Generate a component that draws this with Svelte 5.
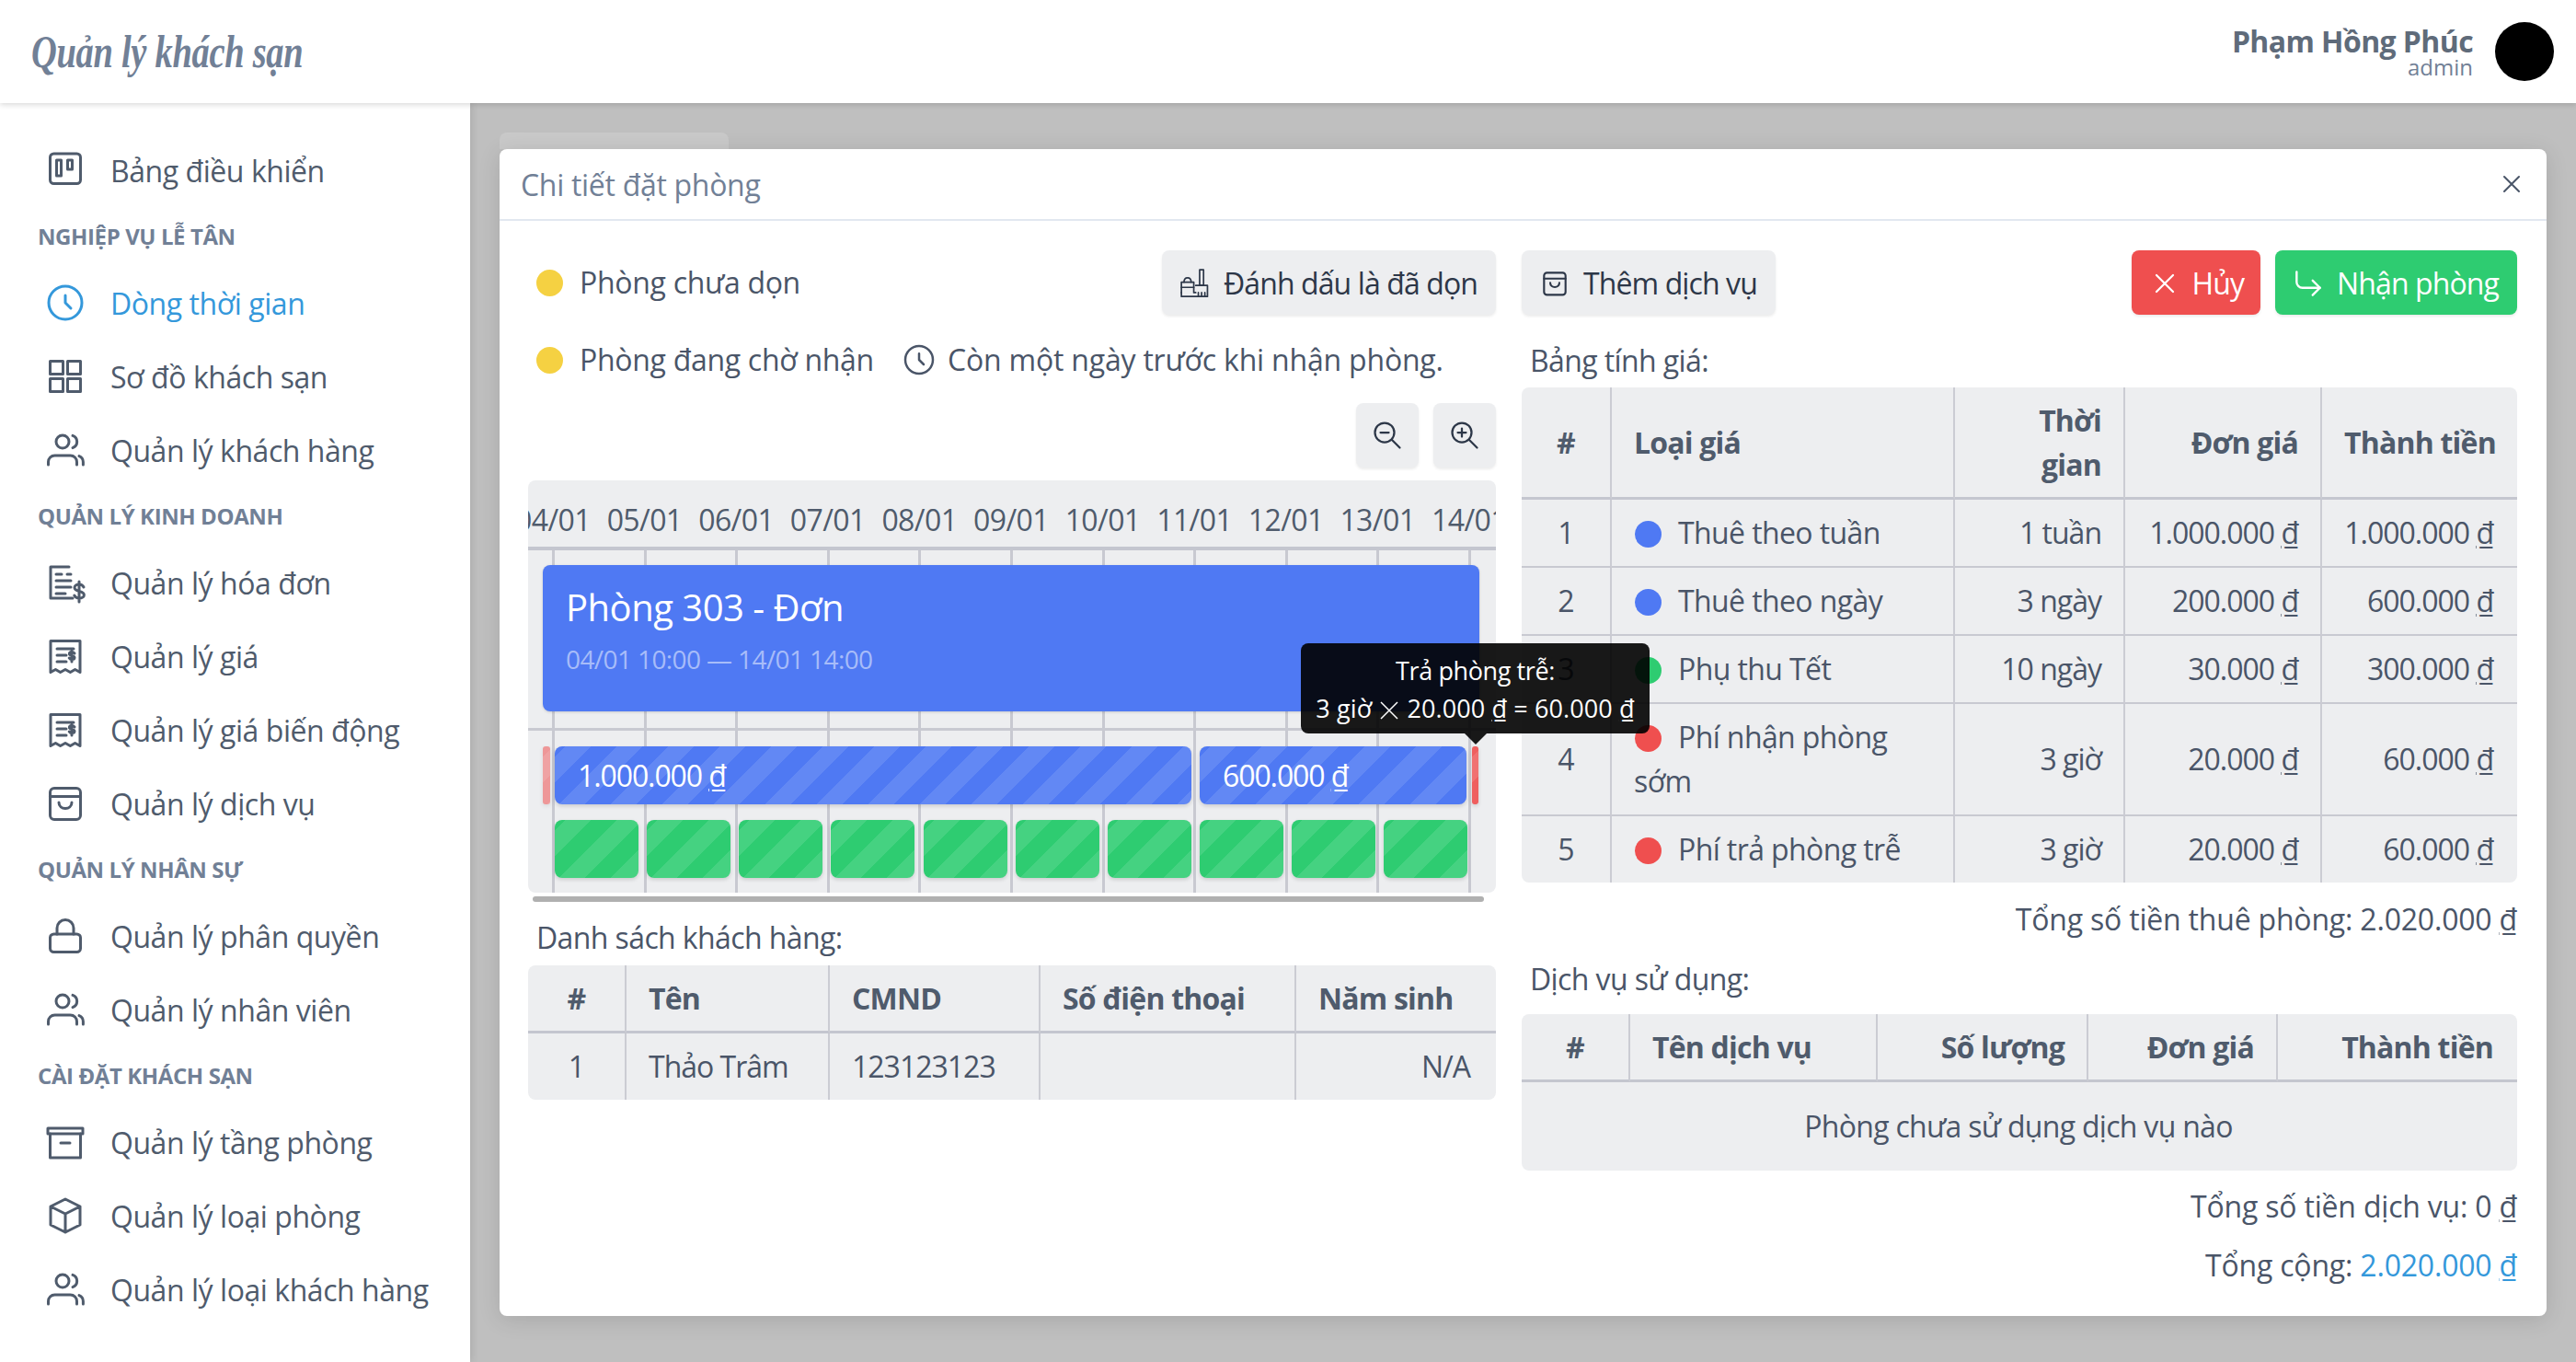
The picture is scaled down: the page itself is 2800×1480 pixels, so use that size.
<script>
  const icons = {
    project: ['M5.75 3h12.5a2 2 0 012 2v12.25a2 2 0 01-2 2H5.75a2 2 0 01-2-2V5a2 2 0 012-2z', 'M7.25 6.5h2.5v8.5h-2.5z', 'M13.25 6.5h2.5v5h-2.5z'],
    clock: ['M12 8v4l3 3m6-3a9 9 0 11-18 0 9 9 0 0118 0z'],
    grid: ['M3.75 3.75h7v7h-7z', 'M13.25 3.75h7v7h-7z', 'M3.75 13.25h7v7h-7z', 'M13.25 13.25h7v7h-7z'],
    users: ['M7 7.5a3.5 3.5 0 107 0 3.5 3.5 0 00-7 0z', 'M2.75 20v-1.5a3.5 3.5 0 013.5-3.5h8.5a3.5 3.5 0 013.5 3.5V20', 'M16 4.2a3.5 3.5 0 010 6.6', 'M19.5 15.3a3.5 3.5 0 012.2 3.2V20'],
    invoice: ['M14 3.5H4v17h12', 'M7 7.5h3M7 11h8M7 14.5h8M7 18h5', 'M13 7.5h2', 'M22 14.5c-.5-1-1.5-1.5-2.5-1.5-1.4 0-2.5.7-2.5 1.8 0 2.5 5.2 1.4 5.2 3.9 0 1.1-1.2 1.8-2.7 1.8-1.1 0-2.1-.5-2.6-1.5M19.5 11.5v11'],
    receipt: ['M4 3.75h16v17l-2.7-1.5-2.6 1.5-2.7-1.5-2.7 1.5-2.6-1.5L4 20.75z', 'M7.5 8h9M7.5 11.5h5M7.5 15h5', 'M17 10.5c-.4-.5-1-.7-1.5-.7-.8 0-1.3.4-1.3 1 0 1.3 2.8.7 2.8 2 0 .6-.6 1-1.4 1-.6 0-1.2-.3-1.5-.8M15.5 9v6'],
    bag: ['M6 3.75h12a2.25 2.25 0 012.25 2.25v12.5A2.25 2.25 0 0118 20.75H6a2.25 2.25 0 01-2.25-2.25V6A2.25 2.25 0 016 3.75z', 'M3.75 8.25h16.5', 'M8.5 11.5c0 4.4 7 4.4 7 0'],
    lock: ['M5.75 11h12.5a2 2 0 012 2v5.75a2 2 0 01-2 2H5.75a2 2 0 01-2-2V13a2 2 0 012-2z', 'M7.5 11V7.75a4.5 4.5 0 019 0V11'],
    archive: ['M2.5 4.5h19v3h-19z', 'M3.75 7.5v13h16.5v-13', 'M9.5 12.5h5'],
    cube: ['M20 7l-8-4-8 4m16 0l-8 4m8-4v10l-8 4m0-10L4 7m8 4v10M4 7v10l8 4'],
    close: ['M6 6l12 12M18 6L6 18'],
    zoomOut: ['M21 21l-6-6m2-5a7 7 0 11-14 0 7 7 0 0114 0z', 'M13 10H7'],
    zoomIn: ['M21 21l-6-6m2-5a7 7 0 11-14 0 7 7 0 0114 0z', 'M10 7v6m3-3H7'],
    enter: ['M15 10l5 5-5 5', 'M4 4v7a4 4 0 004 4h12'],
    broom: ['M15.5 1.5h3v12h-3z', 'M12.5 13.5h9v8.5H1.5v-3', 'M17 22v-3M14.5 22v-3M19.5 22v-3', 'M1.5 19V11h9.5v8H12.5', 'M1.5 15h9.5', 'M3.5 11c0-4.5 5.5-4.5 5.5 0']
  };

  const menu = [
    { icon: 'project', label: 'Bảng điều khiển' },
    { group: 'Nghiệp vụ lễ tân' },
    { icon: 'clock', label: 'Dòng thời gian', active: true },
    { icon: 'grid', label: 'Sơ đồ khách sạn' },
    { icon: 'users', label: 'Quản lý khách hàng' },
    { group: 'Quản lý kinh doanh' },
    { icon: 'invoice', label: 'Quản lý hóa đơn' },
    { icon: 'receipt', label: 'Quản lý giá' },
    { icon: 'receipt', label: 'Quản lý giá biến động' },
    { icon: 'bag', label: 'Quản lý dịch vụ' },
    { group: 'Quản lý nhân sự' },
    { icon: 'lock', label: 'Quản lý phân quyền' },
    { icon: 'users', label: 'Quản lý nhân viên' },
    { group: 'Cài đặt khách sạn' },
    { icon: 'archive', label: 'Quản lý tầng phòng' },
    { icon: 'cube', label: 'Quản lý loại phòng' },
    { icon: 'users', label: 'Quản lý loại khách hàng' }
  ];

  const step = 99.6;
  const cellStep = 100.15;
  const days = ['04/01', '05/01', '06/01', '07/01', '08/01', '09/01', '10/01', '11/01', '12/01', '13/01', '14/01'];

  const prices = [
    { n: 1, color: 'blue', name: 'Thuê theo tuần', time: '1 tuần', unit: '1.000.000', total: '1.000.000' },
    { n: 2, color: 'blue', name: 'Thuê theo ngày', time: '3 ngày', unit: '200.000', total: '600.000' },
    { n: 3, color: 'green', name: 'Phụ thu Tết', time: '10 ngày', unit: '30.000', total: '300.000' },
    { n: 4, color: 'red', name: 'Phí nhận phòng sớm', time: '3 giờ', unit: '20.000', total: '60.000' },
    { n: 5, color: 'red', name: 'Phí trả phòng trễ', time: '3 giờ', unit: '20.000', total: '60.000' }
  ];
</script>

{#snippet icon(name, size = 48, width = 1.5)}
  <svg class="icon" viewBox="0 0 24 24" width={size} height={size} fill="none" stroke="currentColor" stroke-width={width} stroke-linecap="round" stroke-linejoin="round">
    {#each icons[name] as d}<path {d} />{/each}
  </svg>
{/snippet}

{#snippet money(value)}{value} <u>₫</u>{/snippet}

<div class="page">
  <header class="topbar">
    <div class="logo">Quản lý khách sạn</div>
    <div class="user">
      <div class="who">
        <div class="name">Phạm Hồng Phúc</div>
        <div class="role">admin</div>
      </div>
      <div class="avatar"></div>
    </div>
  </header>

  <div class="shell">
    <nav class="sidebar">
      {#each menu as item}
        {#if item.group}
          <div class="group">{item.group}</div>
        {:else}
          <div class="item" class:active={item.active}>
            {@render icon(item.icon)}
            <span>{item.label}</span>
          </div>
        {/if}
      {/each}
    </nav>

    <main class="main">
      <div class="tab"></div>
      <section class="modal">
        <div class="modal-head">
          <span class="title">Chi tiết đặt phòng</span>
          <span class="close">{@render icon('close', 32, 1.5)}</span>
        </div>

        <div class="modal-body">
          <div class="col left">
            <div class="status-row">
              <div class="status"><i class="dot yellow"></i>Phòng chưa dọn</div>
              <button class="btn">{@render icon('broom', 34, 1.2)}Đánh dấu là đã dọn</button>
            </div>
            <div class="status second">
              <i class="dot yellow"></i>Phòng đang chờ nhận
              <span class="hint">{@render icon('clock', 40, 1.5)}Còn một ngày trước khi nhận phòng.</span>
            </div>
            <div class="zoom-row">
              <button class="btn square">{@render icon('zoomOut', 36, 1.5)}</button>
              <button class="btn square">{@render icon('zoomIn', 36, 1.5)}</button>
            </div>

            <div class="timeline-wrap">
              <div class="timeline">
                <div class="dates">
                  {#each days as d, i}
                    <span class="date" style="left: {27 + step * i}px">{d}</span>
                  {/each}
                </div>
                {#each days as d, i}
                  <i class="vline" style="left: {26 + step * i}px"></i>
                {/each}
                <i class="hline"></i>

                <div class="event">
                  <div class="event-title">Phòng 303 - Đơn</div>
                  <div class="event-sub">04/01 10:00 — 14/01 14:00</div>
                </div>

                <div class="bar fee faded" style="left: 16px; width: 8px"></div>
                <div class="bar blue-bar" style="left: 29px; width: 692px">{@render money('1.000.000')}</div>
                <div class="bar blue-bar" style="left: 730px; width: 290px">{@render money('600.000')}</div>
                <div class="bar fee" style="left: 1026px; width: 7px"></div>

                {#each days.slice(0, 10) as d, i}
                  <div class="cell" style="left: {29 + cellStep * i}px"></div>
                {/each}
              </div>

              <div class="tooltip">
                <div>Trả phòng trễ:</div>
                <div class="calc">3 giờ <svg viewBox="0 0 20 20" width="20" height="20" fill="none" stroke="currentColor" stroke-width="1.5"><path d="M1 1l18 18M19 1L1 19" /></svg> 20.000 <u>₫</u> = 60.000 <u>₫</u></div>
              </div>
            </div>
            <div class="scrollbar"></div>

            <div class="label">Danh sách khách hàng:</div>
            <table class="grid guests">
              <colgroup><col style="width: 107px" /><col style="width: 221px" /><col style="width: 229px" /><col style="width: 278px" /><col /></colgroup>
              <thead>
                <tr><th class="c">#</th><th>Tên</th><th>CMND</th><th>Số điện thoại</th><th>Năm sinh</th></tr>
              </thead>
              <tbody>
                <tr><td class="c">1</td><td>Thảo Trâm</td><td>123123123</td><td></td><td class="r">N/A</td></tr>
              </tbody>
            </table>
          </div>

          <div class="col right">
            <div class="actions">
              <button class="btn">{@render icon('bag', 34, 1.5)}Thêm dịch vụ</button>
              <div class="spacer"></div>
              <button class="btn danger">{@render icon('close', 36, 1.5)}Hủy</button>
              <button class="btn success">{@render icon('enter', 38, 1.5)}Nhận phòng</button>
            </div>

            <div class="label">Bảng tính giá:</div>
            <table class="grid">
              <colgroup><col style="width: 98px" /><col style="width: 373px" /><col style="width: 185px" /><col style="width: 214px" /><col /></colgroup>
              <thead>
                <tr><th class="c">#</th><th>Loại giá</th><th class="r wrap">Thời gian</th><th class="r">Đơn giá</th><th class="r">Thành tiền</th></tr>
              </thead>
              <tbody>
                {#each prices as p}
                  <tr>
                    <td class="c">{p.n}</td>
                    <td><i class="dot {p.color}"></i>{p.name}</td>
                    <td class="r">{p.time}</td>
                    <td class="r">{@render money(p.unit)}</td>
                    <td class="r">{@render money(p.total)}</td>
                  </tr>
                {/each}
              </tbody>
            </table>

            <div class="total">Tổng số tiền thuê phòng: {@render money('2.020.000')}</div>

            <div class="label used">Dịch vụ sử dụng:</div>
            <table class="grid">
              <colgroup><col style="width: 118px" /><col style="width: 269px" /><col style="width: 229px" /><col style="width: 206px" /><col /></colgroup>
              <thead>
                <tr><th class="c">#</th><th>Tên dịch vụ</th><th class="r">Số lượng</th><th class="r">Đơn giá</th><th class="r">Thành tiền</th></tr>
              </thead>
              <tbody>
                <tr><td class="empty" colspan="5">Phòng chưa sử dụng dịch vụ nào</td></tr>
              </tbody>
            </table>

            <div class="total service">Tổng số tiền dịch vụ: {@render money('0')}</div>
            <div class="total sum">Tổng cộng: <span class="link">{@render money('2.020.000')}</span></div>
          </div>
        </div>
      </section>
    </main>
  </div>
</div>

<style>
  :global(body) {
    margin: 0;
  }

  .page {
    width: 2800px;
    height: 1480px;
    overflow: hidden;
    font-family: "Open Sans", "Noto Sans", sans-serif;
    font-size: 32px;
    line-height: 48px;
    letter-spacing: -0.6px;
    color: #4a5568;
    background: #fff;
  }

  .topbar {
    position: relative;
    z-index: 3;
    height: 112px;
    padding: 0 24px 0 34px;
    box-sizing: border-box;
    display: flex;
    align-items: center;
    justify-content: space-between;
    background: #fff;
    box-shadow: 0 2px 6px rgba(0, 0, 0, 0.15);
  }

  .logo {
    font-family: "Liberation Serif", serif;
    font-style: italic;
    font-weight: 700;
    font-size: 50px;
    letter-spacing: -0.4px;
    color: #718096;
    transform: scaleX(0.77);
    transform-origin: left center;
  }

  .user {
    display: flex;
    align-items: center;
    gap: 24px;
  }

  .who {
    text-align: right;
  }

  .name {
    padding-top: 2px;
    font-weight: 700;
    line-height: 32px;
    color: #5f6b7a;
  }

  .role {
    font-size: 24px;
    line-height: 24px;
    letter-spacing: 0;
    color: #718096;
  }

  .avatar {
    width: 64px;
    height: 64px;
    border-radius: 50%;
    background: #000;
  }

  .shell {
    display: flex;
    height: 1368px;
  }

  .sidebar {
    position: relative;
    z-index: 2;
    width: 511px;
    flex: none;
    padding-top: 33px;
    box-sizing: border-box;
    background: #fff;
    box-shadow: 2px 0 8px rgba(0, 0, 0, 0.1);
  }

  .item {
    height: 80px;
    padding-left: 47px;
    display: flex;
    align-items: center;
    gap: 25px;
    letter-spacing: -0.45px;
    color: #4f5b6c;
  }

  .item span {
    padding-top: 2px;
  }

  .item.active {
    color: #3498db;
  }

  .group {
    height: 64px;
    padding-left: 41px;
    line-height: 64px;
    font-size: 24px;
    font-weight: 700;
    text-transform: uppercase;
    letter-spacing: -0.4px;
    color: #718096;
  }

  .icon {
    flex: none;
  }

  .main {
    flex: 1;
    padding: 32px 32px 0;
    background: #bfbfbf;
  }

  .tab {
    width: 249px;
    height: 18px;
    border-radius: 8px 8px 0 0;
    background: #c9c9c9;
  }

  .modal {
    height: 1268px;
    border-radius: 8px;
    background: #fff;
    box-shadow: 0 4px 24px rgba(0, 0, 0, 0.12);
  }

  .modal-head {
    height: 76px;
    padding: 0 22px 0 23px;
    display: flex;
    align-items: center;
    justify-content: space-between;
    border-bottom: 2px solid #e2e8f0;
    color: #718096;
  }

  .title {
    padding-top: 2px;
    letter-spacing: -0.3px;
  }

  .close {
    display: flex;
    color: #4a5568;
  }

  .modal-body {
    display: flex;
    gap: 28px;
    padding: 32px 32px 0 31px;
  }

  .left {
    width: 1052px;
    flex: none;
  }

  .right {
    flex: 1;
    min-width: 0;
  }

  .status-row {
    height: 70px;
    display: flex;
    align-items: center;
    justify-content: space-between;
  }

  .status {
    display: flex;
    align-items: center;
    padding-left: 9px;
    letter-spacing: -0.3px;
  }

  .second {
    height: 48px;
    margin-top: 25px;
  }

  .hint {
    display: flex;
    align-items: center;
    gap: 11px;
    margin-left: 29px;
    letter-spacing: -0.2px;
  }

  .dot {
    display: inline-block;
    width: 29px;
    height: 29px;
    margin-right: 18px;
    border-radius: 50%;
    vertical-align: -4px;
  }

  .grid td .dot {
    margin-left: 1px;
  }

  .yellow { background: #f5d142; }
  .blue { background: #4f79f3; }
  .green { background: #2ecc71; }
  .red { background: #ef4f4f; }

  .btn {
    height: 70px;
    padding: 2px 20px 0 19px;
    display: inline-flex;
    align-items: center;
    gap: 14px;
    border: 0;
    border-radius: 8px;
    font: inherit;
    letter-spacing: -0.9px;
    color: #2d3748;
    background: #edeef0;
    box-shadow: 0 2px 3px rgba(0, 0, 0, 0.08);
  }

  .square {
    width: 68px;
    padding: 0;
    justify-content: center;
  }

  .danger {
    padding: 2px 18px 0 18px;
    gap: 12px;
    color: #fff;
    background: #ef4f4f;
  }

  .success {
    padding: 2px 20px 0 17px;
    gap: 12px;
    color: #fff;
    background: #2ecc71;
  }

  .zoom-row {
    display: flex;
    justify-content: flex-end;
    gap: 16px;
    margin-top: 23px;
  }

  .timeline-wrap {
    position: relative;
    margin-top: 14px;
  }

  .timeline {
    position: relative;
    height: 448px;
    overflow: hidden;
    border-radius: 8px;
    background: #edeef0;
  }

  .dates {
    height: 72px;
    border-bottom: 4px solid #c4c6cf;
  }

  .date {
    position: absolute;
    top: 19px;
    transform: translateX(-50%);
    color: #4f5b6c;
  }

  .vline {
    position: absolute;
    top: 76px;
    bottom: 0;
    width: 3px;
    background: #c8c9d1;
  }

  .hline {
    position: absolute;
    left: 0;
    right: 0;
    top: 269px;
    height: 3px;
    background: #c8c9d1;
  }

  .event {
    position: absolute;
    left: 16px;
    top: 92px;
    width: 993px;
    height: 159px;
    padding-left: 25px;
    border-radius: 8px;
    color: #fff;
    background: #4f79f3;
    box-shadow: 0 1px 3px rgba(0, 0, 0, 0.15);
  }

  .event-title {
    margin-top: 18px;
    font-size: 40px;
    line-height: 56px;
    letter-spacing: -0.5px;
  }

  .event-sub {
    margin-top: 8px;
    font-size: 28px;
    line-height: 40px;
    letter-spacing: -0.6px;
    color: #a7bcf9;
  }

  .bar, .cell {
    position: absolute;
    height: 63px;
    border-radius: 8px;
    box-sizing: border-box;
    background-image: linear-gradient(135deg, rgba(255, 255, 255, 0.11) 25%, transparent 25%, transparent 50%, rgba(255, 255, 255, 0.11) 50%, rgba(255, 255, 255, 0.11) 75%, transparent 75%, transparent);
    background-size: 56px 56px;
    background-position: 11px 0;
    box-shadow: 0 2px 4px rgba(0, 0, 0, 0.14);
  }

  .bar {
    top: 289px;
    padding-left: 25px;
    line-height: 63px;
    letter-spacing: -1.1px;
    color: #fff;
  }

  .blue-bar {
    background-color: #4f79f3;
  }

  .fee {
    padding: 0;
    border-radius: 3px;
    background-color: #ef5f5f;
  }

  .faded {
    opacity: 0.6;
  }

  .cell {
    top: 369px;
    width: 91px;
    background-color: #2ecc71;
  }

  .tooltip {
    position: absolute;
    z-index: 5;
    left: 840px;
    top: 177px;
    width: 379px;
    height: 98px;
    padding-top: 9px;
    box-sizing: border-box;
    border-radius: 8px;
    text-align: center;
    font-size: 27px;
    line-height: 41px;
    letter-spacing: -0.4px;
    color: #fff;
    background: rgba(0, 0, 0, 0.9);
  }

  .tooltip::after {
    content: "";
    position: absolute;
    left: 50%;
    bottom: -12px;
    margin-left: -12px;
    border: 12px solid transparent;
    border-bottom: 0;
    border-top-color: rgba(0, 0, 0, 0.9);
  }

  .calc {
    letter-spacing: 0.1px;
  }

  .calc svg {
    margin: 0 2px;
    vertical-align: -2px;
  }

  .scrollbar {
    height: 6px;
    margin: 4px 13px 0 5px;
    border-radius: 3px;
    background: #b0b0b0;
  }

  .label {
    padding-left: 9px;
    margin: 15px 0 6px;
  }

  .grid {
    width: 100%;
    table-layout: fixed;
    border-collapse: separate;
    border-spacing: 0;
    border-radius: 8px;
    overflow: hidden;
    background: #edeef0;
  }

  .grid th, .grid td {
    padding: 12px 24px 12px;
    text-align: left;
    border-right: 2px solid #cbccd3;
    border-bottom: 2px solid #c8c9d1;
  }

  .grid th {
    padding-bottom: 11px;
    font-weight: 700;
    letter-spacing: -0.8px;
    border-bottom: 3px solid #c4c6cf;
    color: #4f5b6c;
  }

  .grid th:last-child, .grid td:last-child {
    padding-right: 26px;
    border-right: 0;
  }

  .grid tbody tr:last-child td {
    border-bottom: 0;
  }

  .grid .c {
    text-align: center;
  }

  .grid .r {
    text-align: right;
    white-space: nowrap;
    letter-spacing: -1px;
  }

  .grid .r.wrap {
    white-space: normal;
  }

  .grid th.r {
    letter-spacing: -0.8px;
  }

  .guests td {
    letter-spacing: -1px;
  }

  .guests td:last-child {
    padding-right: 28px;
  }

  .grid .empty {
    padding: 24px;
    text-align: center;
    border-right: 0;
    letter-spacing: -0.7px;
  }

  .actions {
    display: flex;
    gap: 16px;
  }

  .spacer {
    flex: 1;
  }

  .right .label {
    margin: 26px 0 5px;
  }

  .right .label.used {
    margin: 17px 0 14px;
  }

  .total {
    margin-top: 16px;
    text-align: right;
    letter-spacing: -0.2px;
  }

  .service {
    margin-top: 15px;
  }

  .sum {
    margin-top: 16px;
  }

  .link {
    color: #3498db;
  }
</style>
